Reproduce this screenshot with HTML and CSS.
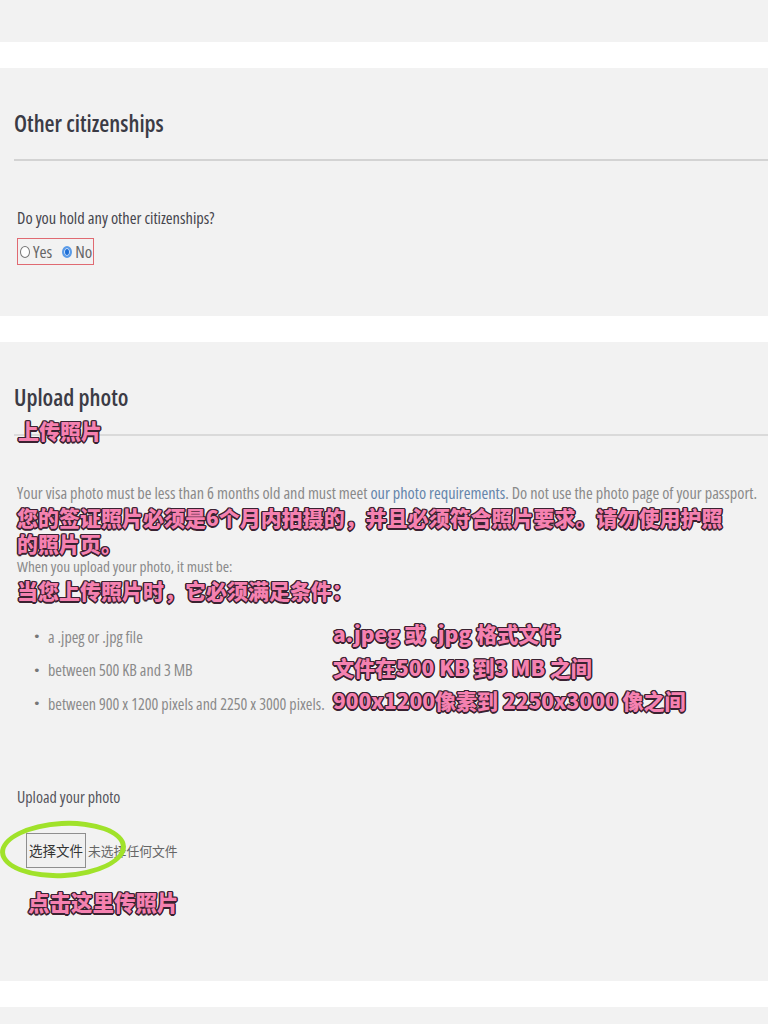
FILE: index.html
```html
<!DOCTYPE html>
<html lang="en">
<head>
<meta charset="utf-8">
<title>Visa application</title>
<link rel="stylesheet" href="styles.css">
</head>
<body>
<div class="page">
  <div class="band"></div>

  <section class="panel panel-cit">
    <h2 class="heading">Other citizenships</h2>
    <div class="divider"></div>
    <div class="body">
      <p class="question">Do you hold any other citizenships?</p>
      <div class="radios">
        <label class="radio"><span class="dot"></span>Yes</label>
        <label class="radio"><span class="dot on"></span>No</label>
      </div>
    </div>
  </section>

  <section class="panel panel-photo">
    <h2 class="heading">Upload photo</h2>
    <span class="anno anno-title">上传照片</span>
    <div class="divider thin"></div>
    <div class="body">
      <p class="text text-first">Your visa photo must be less than 6 months old and must meet <a class="link" href="#">our photo requirements</a>. Do not use the photo page of your passport.</p>
      <p class="anno anno-para"><span class="anno-line">您的签证照片必须是6个月内拍摄的，并且必须符合照片要求。请勿使用护照</span><span class="anno-line">的照片页。</span></p>
      <p class="text text-second">When you upload your photo, it must be:</p>
      <p class="anno anno-para">当您上传照片时，它必须满足条件：</p>
      <ul class="reqs">
        <li class="req"><span class="bullet">•</span><span class="req-text">a .jpeg or .jpg file</span><span class="anno anno-req">a.jpeg 或 .jpg 格式文件</span></li>
        <li class="req"><span class="bullet">•</span><span class="req-text">between 500 KB and 3 MB</span><span class="anno anno-req">文件在500 KB 到3 MB 之间</span></li>
        <li class="req"><span class="bullet">•</span><span class="req-text">between 900 x 1200 pixels and 2250 x 3000 pixels.</span><span class="anno anno-req">900x1200像素到 2250x3000 像之间</span></li>
      </ul>
      <p class="label">Upload your photo</p>
      <div class="file">
        <span class="file-btn">选择文件</span><span class="file-name">未选择任何文件</span>
        <span class="circle"></span>
      </div>
      <p class="anno anno-click">点击这里传照片</p>
    </div>
  </section>

  <div class="band"></div>
</div>
</body>
</html>
```

FILE: styles.css
```css
* { box-sizing: border-box; }
html, body { margin: 0; padding: 0; }
body {
  background: #ffffff;
  font-family: "Open Sans", "DejaVu Sans", sans-serif;
  font-stretch: 75%;
  overflow: hidden;
}
.page {
  display: flex;
  flex-direction: column;
  gap: 26px;
  height: 1024px;
}
.band {
  background: #f2f2f2;
  height: 42px;
  flex: 0 0 auto;
}
.band:last-child { flex: 1 1 auto; }
.panel {
  background: #f2f2f2;
  position: relative;
  flex: 0 0 auto;
}
.panel-cit { height: 248px; padding-top: 40px; }
.panel-photo { height: 639px; padding-top: 40px; }

.heading {
  margin: 0 0 0 14px;
  font-size: 23px;
  line-height: 30px;
  font-weight: 600;
  color: #3b3b45;
}
.divider {
  margin: 21px 0 0 14px;
  height: 2px;
  background: #d3d3d3;
}
.divider.thin { margin-top: 22px; background: #dadada; }
.body { padding-left: 17px; }

.question {
  margin: 46px 0 0;
  font-size: 16.4px;
  line-height: 22px;
  font-weight: 500;
  color: #45454d;
}
.radios {
  margin-top: 9px;
  display: inline-flex;
  align-items: center;
  gap: 10px;
  height: 27px;
  padding: 0 1px 0 2px;
  border: 1px solid #e06a72;
  font-size: 17px;
  color: #666;
}
.radio { display: inline-flex; align-items: center; gap: 3px; }
.dot {
  width: 10px;
  height: 12px;
  border-radius: 50%;
  border: 1px solid #777;
  background: #fff;
}
.dot.on {
  border: 2px solid #5a9be8;
  background: #1f6fd6;
  box-shadow: inset 0 0 0 1px #cfe2fa;
}

.text {
  margin: 0;
  line-height: 20px;
  color: #8a8a8a;
}
.text-first { margin-top: 47px; font-size: 16.3px; }
.text-second { font-size: 15.3px; line-height: 20px; }
.link { color: #6585ab; text-decoration: none; }

.anno {
  font-family: "Noto Sans CJK SC", sans-serif;
  font-stretch: normal;
  font-weight: 900;
  color: #f581b0;
  text-shadow:
    1.5px 0 0 #3a2231, -1.5px 0 0 #3a2231, 0 1.5px 0 #3a2231, 0 -1.5px 0 #3a2231,
    1px 1px 0 #3a2231, -1px 1px 0 #3a2231, 1px -1px 0 #3a2231, -1px -1px 0 #3a2231,
    0 0 3px rgba(255,255,255,0.8);
}
.anno-title {
  position: absolute;
  left: 18px;
  top: 75px;
  font-size: 21px;
  line-height: 26px;
}
.anno-para {
  margin: 1px 0 0;
  font-size: 20.9px;
  line-height: 26px;
  letter-spacing: 0.1px;
}
.anno-line { display: block; height: 26px; }

.reqs {
  list-style: none;
  margin: 17px 0 0;
  padding: 0;
}
.req {
  display: grid;
  grid-template-columns: 15px 285px auto;
  align-items: center;
  height: 33.5px;
  padding-left: 16px;
  font-size: 16px;
  color: #8a8a8a;
}
.bullet { font-size: 13px; color: #777; font-family: "DejaVu Sans", sans-serif; font-stretch: normal; }
.anno-req {
  font-size: 21px;
  line-height: 26px;
  margin-bottom: 7px;
}

.label {
  margin: 65px 0 0;
  font-size: 16px;
  line-height: 22px;
  font-weight: 500;
  color: #55555c;
}
.file {
  position: relative;
  margin: 25px 0 0 9px;
  display: flex;
  align-items: center;
  height: 35px;
}
.file-btn {
  display: inline-flex;
  align-items: center;
  justify-content: center;
  width: 60px;
  height: 35px;
  border: 1px solid #8e8e8e;
  background: #f0f0f0;
  font-family: "Noto Sans CJK SC", sans-serif;
  font-stretch: normal;
  font-size: 13.5px;
  color: #333;
}
.file-name {
  margin-left: 2px;
  font-family: "Noto Sans CJK SC", sans-serif;
  font-stretch: normal;
  font-size: 12.8px;
  color: #666;
}
.circle {
  position: absolute;
  left: -26px;
  top: -12px;
  width: 126px;
  height: 57px;
  border: 5.5px solid #a0e22a;
  border-radius: 50%;
  transform: rotate(-3deg);
}
.anno-click {
  margin: 21px 0 0 11px;
  font-size: 21.5px;
  line-height: 26px;
}
```
